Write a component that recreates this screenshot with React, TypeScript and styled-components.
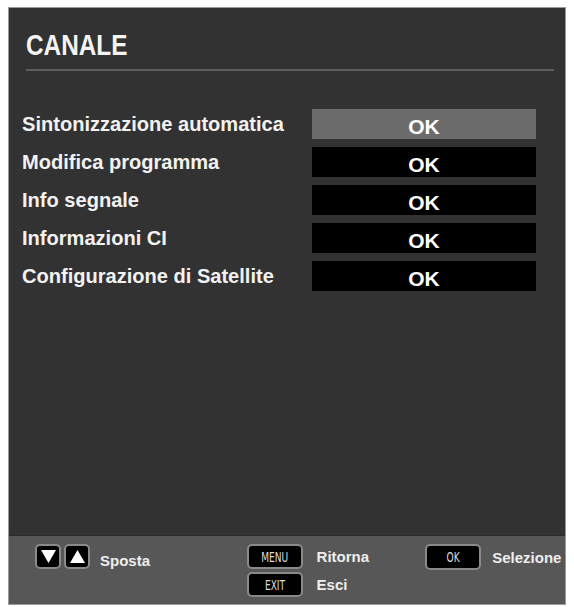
import React from "react";
import styled, { createGlobalStyle } from "styled-components";

const GlobalStyle = createGlobalStyle`
  html, body {
    margin: 0;
    padding: 0;
    background: #ffffff;
  }
  body {
    font-family: "Liberation Sans", Arial, sans-serif;
  }
`;

const Panel = styled.div`
  margin: 7px 0 0 8px;
  width: 558px;
  height: 598px;
  box-sizing: border-box;
  background: #323232;
  border: 1px solid #9a9a9a;
  display: flex;
  flex-direction: column;
`;

const Header = styled.div`
  padding: 17px 12px 0 17px;
`;

const Title = styled.h1`
  margin: 0;
  height: 40px;
  color: #f4f4f4;
  font-size: 29px;
  font-weight: 700;
  line-height: 40px;
  transform: scaleX(0.84);
  transform-origin: left center;
`;

const Divider = styled.div`
  margin: 4px 0 0 0;
  height: 2px;
  width: 528px;
  background: #5e5e5e;
`;

const Menu = styled.div`
  flex: 1;
  padding: 38px 0 0 13px;
  display: flex;
  flex-direction: column;
  gap: 8px;
`;

const Row = styled.div`
  display: grid;
  grid-template-columns: 290px 224px;
  height: 30px;
  align-items: center;
`;

const Label = styled.span`
  color: #f2f2f2;
  font-size: 21px;
  font-weight: 700;
  white-space: nowrap;
  transform: scaleX(0.955);
  transform-origin: left center;
`;

const OkBox = styled.div<{ $active?: boolean }>`
  height: 30px;
  background: ${(p) => (p.$active ? "#6c6c6c" : "#000000")};
  color: #ffffff;
  font-size: 21px;
  font-weight: 700;
  display: flex;
  align-items: center;
  justify-content: center;
  padding-top: 6px;
  box-sizing: border-box;
`;

const Footer = styled.div`
  height: 69px;
  background: #575757;
  border-top: 1px solid #2a2a2a;
  display: flex;
  padding: 8px 0 0 26px;
  box-sizing: border-box;
`;

const Group = styled.div<{ $width: number }>`
  width: ${(p) => p.$width}px;
  display: flex;
  flex-direction: column;
  gap: 3px;
`;

const Hint = styled.div`
  display: flex;
  align-items: center;
  gap: 3px;
`;

const Key = styled.div<{ $w: number; $h?: number }>`
  width: ${(p) => p.$w}px;
  height: ${(p) => p.$h ?? 25}px;
  box-sizing: border-box;
  background: #000;
  border: 2px solid #8a8a8a;
  border-radius: 5px;
  display: flex;
  align-items: center;
  justify-content: center;
  color: #dcdcdc;
  font-family: "DejaVu Sans Condensed", "Liberation Sans", sans-serif;
  font-size: 14px;
`;

const KeyText = styled.span`
  transform: scaleX(0.72);
  white-space: nowrap;
`;

const HintText = styled.span<{ $ml: number; $mt?: number }>`
  margin-left: ${(p) => p.$ml}px;
  margin-top: ${(p) => p.$mt ?? 0}px;
  color: #eeeeee;
  font-size: 15px;
  font-weight: 700;
  white-space: nowrap;
`;

const Arrow = ({ up }: { up?: boolean }) => (
  <svg width="15" height="13" viewBox="0 0 15 13">
    <polygon points={up ? "7.5,0 15,13 0,13" : "0,0 15,0 7.5,13"} fill="#fff" />
  </svg>
);

const items = [
  "Sintonizzazione automatica",
  "Modifica programma",
  "Info segnale",
  "Informazioni CI",
  "Configurazione di Satellite",
];

export default function App() {
  return (
    <>
      <GlobalStyle />
      <Panel>
        <Header>
          <Title>CANALE</Title>
          <Divider />
        </Header>
        <Menu>
          {items.map((label, i) => (
            <Row key={label}>
              <Label>{label}</Label>
              <OkBox $active={i === 0}>OK</OkBox>
            </Row>
          ))}
        </Menu>
        <Footer>
          <Group $width={212}>
            <Hint>
              <Key $w={26}>
                <Arrow />
              </Key>
              <Key $w={26}>
                <Arrow up />
              </Key>
              <HintText $ml={7} $mt={8}>Sposta</HintText>
            </Hint>
          </Group>
          <Group $width={179}>
            <Hint>
              <Key $w={56}>
                <KeyText>MENU</KeyText>
              </Key>
              <HintText $ml={11}>Ritorna</HintText>
            </Hint>
            <Hint>
              <Key $w={56}>
                <KeyText>EXIT</KeyText>
              </Key>
              <HintText $ml={11}>Esci</HintText>
            </Hint>
          </Group>
          <Group $width={140}>
            <Hint>
              <Key $w={56} $h={26}>
                <KeyText>OK</KeyText>
              </Key>
              <HintText $ml={8}>Selezione</HintText>
            </Hint>
          </Group>
        </Footer>
      </Panel>
    </>
  );
}
